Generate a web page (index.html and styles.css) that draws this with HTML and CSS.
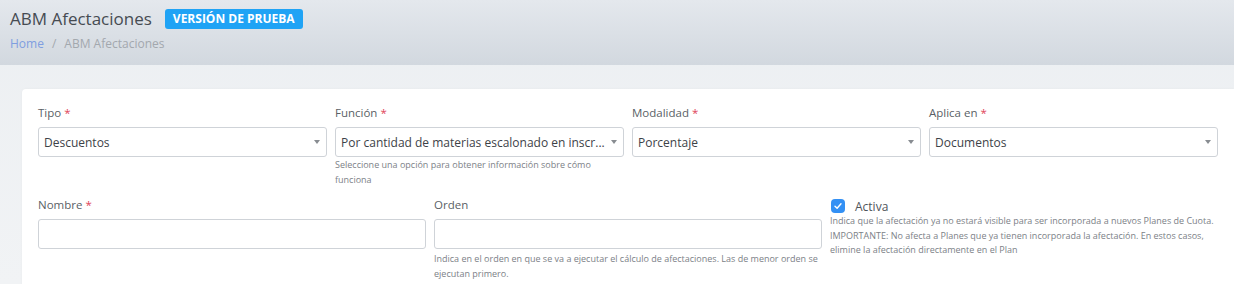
FILE: index.html
```html
<!DOCTYPE html>
<html lang="es">
<head>
    <meta charset="UTF-8">
    <meta name="viewport" content="width=device-width, initial-scale=1.0">
    <title>ABM Afectaciones</title>
    <link rel="stylesheet" href="styles.css">
</head>
<body>
    <div class="page-header">
        <div class="title-row">
            <h1 class="page-title">ABM Afectaciones</h1>
            <span class="badge">VERSIÓN DE PRUEBA</span>
        </div>
        <div class="breadcrumb">
            <a href="#" class="crumb-link">Home</a>
            <span class="crumb-sep">/</span>
            <span class="crumb-current">ABM Afectaciones</span>
        </div>
    </div>

    <div class="content">
        <div class="card">
            <div class="row row-4">
                <div class="field">
                    <label class="label">Tipo <span class="req">*</span></label>
                    <div class="select"><span class="select-text">Descuentos</span><span class="caret"></span></div>
                </div>
                <div class="field">
                    <label class="label">Función <span class="req">*</span></label>
                    <div class="select"><span class="select-text">Por cantidad de materias escalonado en inscr...</span><span class="caret"></span></div>
                    <div class="help help-tight">Seleccione una opción para obtener información sobre cómo funciona</div>
                </div>
                <div class="field">
                    <label class="label">Modalidad <span class="req">*</span></label>
                    <div class="select"><span class="select-text">Porcentaje</span><span class="caret"></span></div>
                </div>
                <div class="field">
                    <label class="label">Aplica en <span class="req">*</span></label>
                    <div class="select"><span class="select-text">Documentos</span><span class="caret"></span></div>
                </div>
            </div>

            <div class="row row-3">
                <div class="field">
                    <label class="label">Nombre <span class="req">*</span></label>
                    <input type="text" class="input">
                </div>
                <div class="field">
                    <label class="label">Orden</label>
                    <input type="text" class="input">
                    <div class="help">Indica en el orden en que se va a ejecutar el cálculo de afectaciones. Las de menor orden se ejecutan primero.</div>
                </div>
                <div class="field field-check">
                    <div class="check-row">
                        <span class="checkbox">
                            <svg width="10" height="10" viewBox="0 0 10 10"><path d="M2 5.2 L4.1 7.2 L8 2.8" fill="none" stroke="#fff" stroke-width="1.4" stroke-linecap="round" stroke-linejoin="round"/></svg>
                        </span>
                        <span class="check-label">Activa</span>
                    </div>
                    <div class="help">Indica que la afectación ya no estará visible para ser incorporada a nuevos Planes de Cuota. IMPORTANTE: No afecta a Planes que ya tienen incorporada la afectación. En estos casos, elimine la afectación directamente en el Plan</div>
                </div>
            </div>
        </div>
    </div>
</body>
</html>
```

FILE: styles.css
```css
* {
    margin: 0;
    padding: 0;
    box-sizing: border-box;
}

body {
    width: 1234px;
    height: 284px;
    overflow: hidden;
    font-family: "Open Sans", Arial, sans-serif;
    background: linear-gradient(to bottom, #eceff2, #f1f3f5);
    color: #4a4f55;
}

.page-header {
    height: 65px;
    padding: 7px 10px 0 10px;
    background: linear-gradient(to bottom, #e4e8ed, #d2d8df);
}

.title-row {
    display: flex;
    align-items: center;
    gap: 13px;
}

.page-title {
    font-size: 17px;
    font-weight: 400;
    color: #464b52;
    line-height: 24px;
}

.badge {
    background-color: #1fa3f5;
    color: #ffffff;
    font-size: 12px;
    font-weight: 700;
    padding: 1px 8px;
    border-radius: 3px;
    line-height: 18px;
}

.breadcrumb {
    margin-top: 4px;
    font-size: 12px;
    display: flex;
    gap: 8px;
    line-height: 18px;
}

.crumb-link {
    color: #7f9ee0;
    text-decoration: none;
}

.crumb-sep,
.crumb-current {
    color: #a3a8ae;
}

.content {
    padding: 24px 0 0 22px;
}

.card {
    background-color: #ffffff;
    border-radius: 4px 0 0 0;
    padding: 16px 16px 0 16px;
    height: 200px;
    box-shadow: 0 0 3px rgba(0, 0, 0, 0.04);
}

.row {
    display: grid;
    column-gap: 8px;
}

.row-4 {
    grid-template-columns: repeat(4, minmax(0, 1fr));
    height: 92px;
}

.row-3 {
    grid-template-columns: repeat(3, minmax(0, 1fr));
}

.field {
    min-width: 0;
}

.label {
    display: block;
    font-size: 11.5px;
    color: #5a5f66;
    line-height: 15px;
    margin-bottom: 7px;
}

.req {
    color: #e0445a;
}

.select {
    height: 30px;
    border: 1px solid #cfd3d8;
    border-radius: 3px;
    display: flex;
    align-items: center;
    padding: 0 6px 0 5px;
}

.select-text {
    flex: 1;
    min-width: 0;
    font-size: 12px;
    color: #3d4248;
    white-space: nowrap;
    overflow: hidden;
    padding-right: 4px;
}

.caret {
    width: 0;
    height: 0;
    border-left: 3.5px solid transparent;
    border-right: 3.5px solid transparent;
    border-top: 4px solid #888c91;
}

.input {
    display: block;
    width: 100%;
    height: 30px;
    border: 1px solid #cfd3d8;
    border-radius: 3px;
    background: #ffffff;
}

.help {
    margin-top: 2px;
    font-size: 9px;
    line-height: 15px;
    color: #7c8187;
}

.help-tight {
    margin-top: 0;
}

.field-check {
    padding-top: 2px;
}

.check-row {
    display: flex;
    align-items: center;
    gap: 10px;
    height: 14px;
}

.checkbox {
    width: 14px;
    height: 14px;
    border-radius: 4px;
    background-color: #3390f4;
    display: flex;
    align-items: center;
    justify-content: center;
    margin-left: 1px;
}

.check-label {
    font-size: 12px;
    color: #4f545a;
}

.field-check .help {
    margin-top: 1px;
    line-height: 14.5px;
}
```
